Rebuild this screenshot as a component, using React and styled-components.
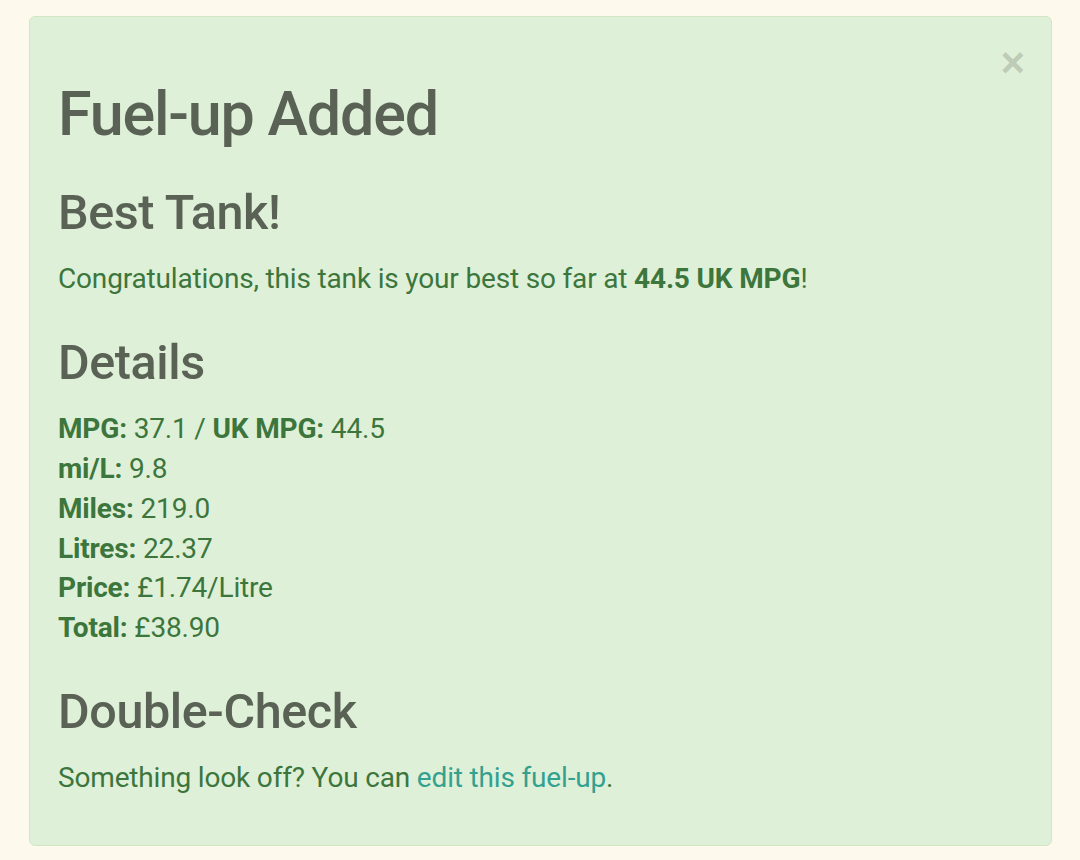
import React from 'react';
import styled, { createGlobalStyle } from 'styled-components';

const GlobalStyle = createGlobalStyle`
  html, body {
    margin: 0;
    padding: 0;
    background: #fdf9ec;
    font-family: Roboto, "Liberation Sans", sans-serif;
  }
`;

const Page = styled.div`
  padding: 16px 28px 14px 29px;
`;

const Alert = styled.div`
  position: relative;
  background: #dff0d8;
  border: 1px solid #d3e6c4;
  border-radius: 6px;
  padding: 28px 28px 27px 28px;
  color: #3c763d;
  font-size: 28px;
  line-height: 39.7px;
  letter-spacing: -0.17px;
`;

const CloseButton = styled.button`
  position: absolute;
  top: 25px;
  right: 26px;
  border: 0;
  background: none;
  padding: 0;
  font-family: "Liberation Sans", sans-serif;
  font-size: 42px;
  font-weight: bold;
  line-height: 1;
  color: #000;
  opacity: 0.15;
  cursor: pointer;
`;

const Title = styled.h1`
  margin: 36px 0 0;
  font-size: 61px;
  font-weight: 500;
  line-height: 1.1;
  letter-spacing: -1.2px;
  color: #5a6155;
`;

const Heading = styled.h3`
  margin: ${(p) => (p.$first ? '38px' : '37px')} 0 20px;
  font-size: 48.5px;
  font-weight: 500;
  line-height: 1.1;
  letter-spacing: -0.4px;
  color: #5a6155;
`;

const Para = styled.p`
  margin: 0 0 20px;
`;

const DetailList = styled.div`
  display: flex;
  flex-direction: column;
`;

const Label = styled.strong`
  font-weight: 700;
`;

const EditLink = styled.a`
  color: #33a190;
  text-decoration: none;
`;

const details = [
  [['MPG', '37.1'], ['UK MPG', '44.5']],
  [['mi/L', '9.8']],
  [['Miles', '219.0']],
  [['Litres', '22.37']],
  [['Price', '£1.74/Litre']],
  [['Total', '£38.90']],
];

export default function App() {
  return (
    <Page>
      <GlobalStyle />
      <Alert>
        <CloseButton aria-label="Close">×</CloseButton>
        <Title>Fuel-up Added</Title>
        <Heading $first>Best Tank!</Heading>
        <Para>
          Congratulations, this tank is your best so far at <Label>44.5 UK MPG</Label>!
        </Para>
        <Heading>Details</Heading>
        <DetailList>
          {details.map((row, i) => (
            <div key={i}>
              {row.map(([k, v], j) => (
                <React.Fragment key={k}>
                  {j > 0 && ' / '}
                  <Label>{k}:</Label> {v}
                </React.Fragment>
              ))}
            </div>
          ))}
        </DetailList>
        <Heading>Double-Check</Heading>
        <Para>
          Something look off? You can <EditLink href="#">edit this fuel-up</EditLink>.
        </Para>
      </Alert>
    </Page>
  );
}
